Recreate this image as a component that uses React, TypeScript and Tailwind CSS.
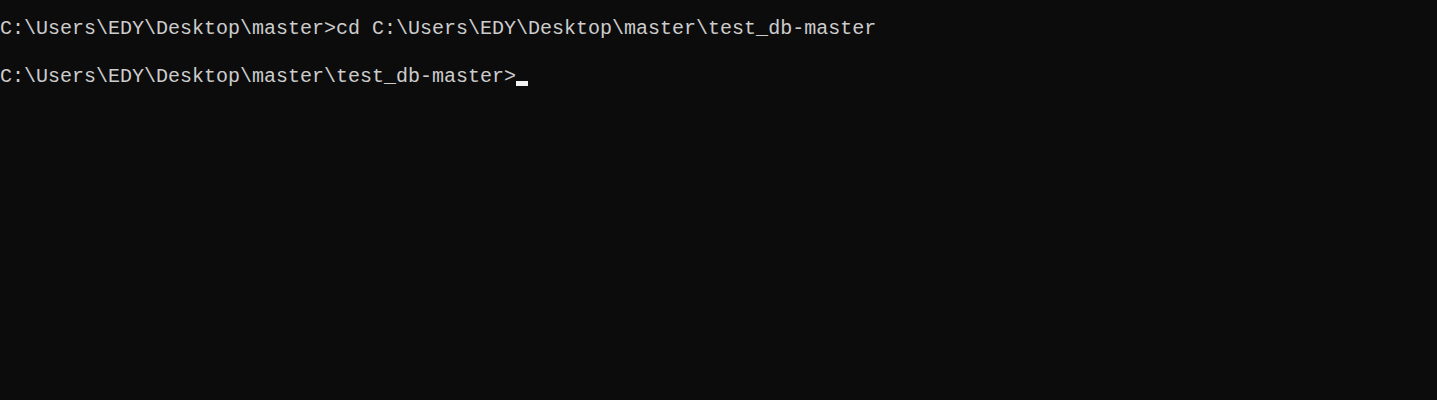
import React from "react";

const lines = [
  "C:\\Users\\EDY\\Desktop\\master>cd C:\\Users\\EDY\\Desktop\\master\\test_db-master",
  "",
];

const prompt = "C:\\Users\\EDY\\Desktop\\master\\test_db-master>";

export default function App() {
  return (
    <div className="h-[400px] w-full overflow-hidden bg-[#0c0c0c] pt-[17px] font-['Liberation_Mono',monospace] text-[20px] leading-[24px] text-[#cccccc]">
      {lines.map((line, i) => (
        <div key={i} className="h-6 whitespace-pre">
          {line}
        </div>
      ))}
      <div className="flex h-6 items-end whitespace-pre">
        <span>{prompt}</span>
        <span className="mb-[3px] h-[5px] w-[12px] bg-[#f2f2f2]" />
      </div>
    </div>
  );
}
